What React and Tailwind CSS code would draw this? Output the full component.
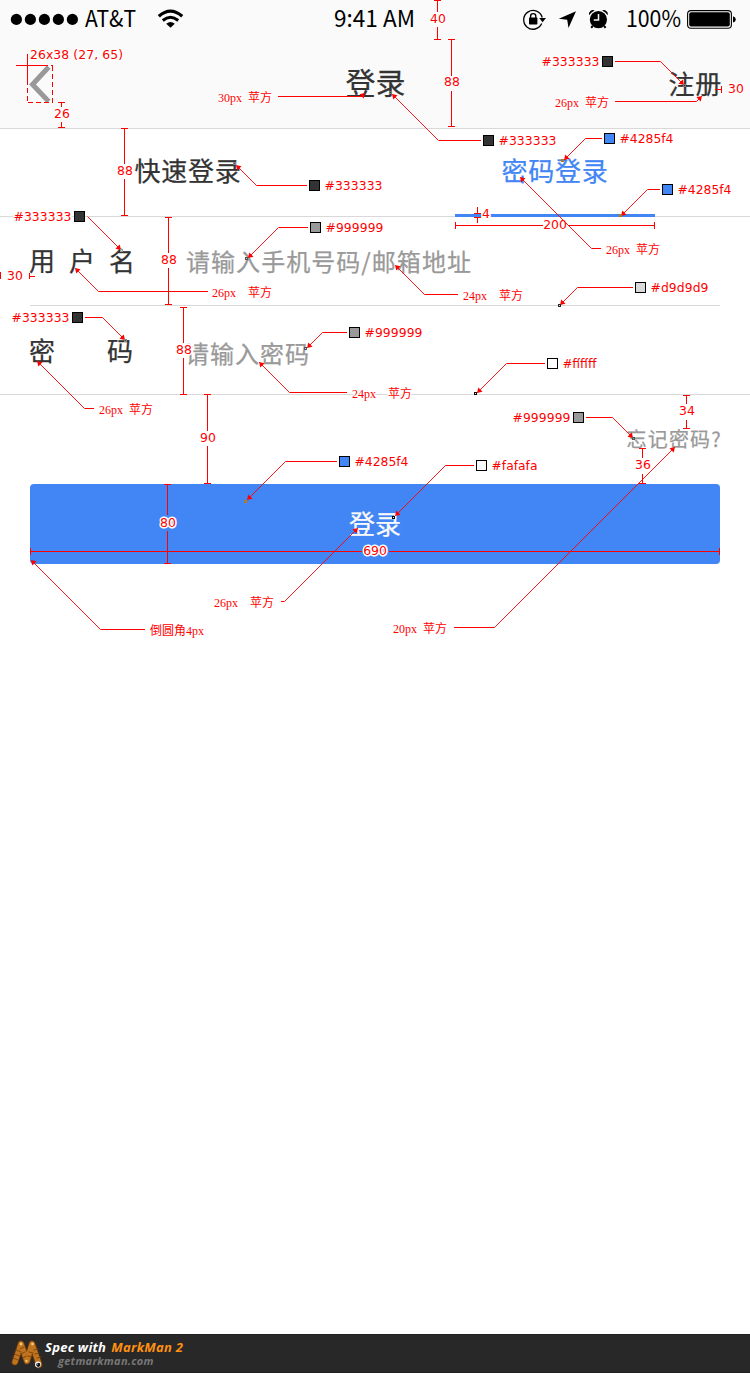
import React from "react";

const RED = "#ff0000";

/* Vertical dimension marks: x, top, bottom, gap top, gap bottom, label, baseline */
const VERTICAL = [
  [437, 0, 39, 12, 27, "40", 23],
  [451, 39, 126, 76, 91, "88", 86],
  [61, 102, 127, 107, 122, "26", 118],
  [124, 128, 215, 164, 179, "88", 175],
  [168, 217, 304, 253, 268, "88", 264],
  [183, 307, 394, 343, 358, "88", 354],
  [207, 394, 483, 431, 446, "90", 442],
  [686, 395, 428, 404, 420, "34", 415],
  [642, 448, 483, 458, 474, "36", 469],
  [167, 484, 563, 515, 531, "80", 527],
];

/* Horizontal dimension marks: y, left, right, gap left, gap right, label, baseline */
const HORIZONTAL = [
  [551, 30, 719, 362, 389, "690", 555],
  [225, 455, 654, 543, 568, "200", 229],
];

/* Colour call-outs: text x, text width, baseline, swatch x/y, fill, leader points, sample point and its colour */
const COLORS = [
  ["#333333", 541.5, 58, 66, 602, 56, [[615, 61], [660, 61], [683, 84]], [684, 85, "#777"]],
  ["#333333", 498.5, 58, 145, 483, 135, [[481, 140], [438, 140], [392, 94]], [390, 92, "#777"]],
  ["#4285f4", 619.5, 54, 143, 604, 133, [[602, 138], [585, 138], [564, 159]], [562, 160, "#bd7a0b"]],
  ["#4285f4", 677.5, 54, 194, 662, 184, [[660, 189], [647, 189], [621, 215]], [620, 215, "#bd7a0b"]],
  ["#333333", 324.5, 58, 190, 309, 180, [[307, 185], [256, 185], [236, 165]], [234, 163, "#888"]],
  ["#999999", 325.5, 58, 232, 310, 222, [[308, 227], [278, 227], [248, 257]], [246, 258, "#555"]],
  ["#333333", 13.5, 58, 221, 74, 211, [[87, 216], [120, 249]], [121, 250, "#999"]],
  ["#d9d9d9", 650.5, 58, 292, 635, 282, [[633, 287], [577, 287], [560, 304]], [559, 305, "#262626"]],
  ["#333333", 11.5, 58, 322, 72, 312, [[85, 317], [102, 317], [124, 339]], [125, 340, "#888"]],
  ["#999999", 364.5, 58, 337, 349, 327, [[347, 332], [322, 332], [307, 347]], [305, 348, "#555"]],
  ["#ffffff", 562.5, 34, 368, 547, 358, [[545, 363], [506, 363], [477, 392]], [475, 393, "#000"]],
  ["#999999", 512.5, 58, 422, 573, 412, [[586, 417], [612, 417], [632, 437]], [633, 438, "#555"]],
  ["#4285f4", 354.5, 54, 466, 339, 456, [[337, 461], [285, 461], [247, 499]], [245, 501, "#bd7a0b"]],
  ["#fafafa", 491.5, 46, 470, 476, 460, [[474, 465], [445, 465], [395, 515]], [393, 517, "#000"]],
];

/* Type notes: text, x, baseline, number of spaces, leader points */
const NOTES = [
  ["30px", 218, 102, 1, [[278, 96], [361, 96], [364, 93]]],
  ["26px", 555, 107, 1, [[615, 101], [696, 101], [701, 96]]],
  ["26px", 606, 254, 1, [[601, 248], [591, 248], [520, 177]]],
  ["26px", 212, 297, 2, [[208, 291], [98, 291], [75, 268]]],
  ["24px", 463, 300, 2, [[458, 294], [424, 294], [395, 265]]],
  ["24px", 352, 398, 2, [[347, 392], [289, 392], [259, 362]]],
  ["26px", 99, 414, 1, [[94, 408], [84, 408], [37, 361]]],
  ["26px", 214, 607, 2, [[281, 601], [284, 601], [357, 528]]],
  ["20px", 393, 633, 1, [[454, 627], [494, 627], [674, 447]]],
];

function Leader({ points }) {
  const n = points.length;
  const [tx, ty] = points[n - 1];
  const [px, py] = points[n - 2];
  const sx = px < tx ? -1 : 1;
  const sy = py < ty ? -1 : 1;
  const x = tx + 0.5;
  const y = ty + 0.5;
  return (
    <g>
      {n === 3 && (
        <path d={`M${points[0][0]} ${points[0][1] + 0.5}H${px + 0.5}`} stroke={RED} strokeWidth="1" />
      )}
      <path d={`M${px + 0.5} ${py + 0.5}L${x} ${y}`} stroke={RED} strokeWidth="0.9" />
      <path
        d={`M${x - sx * 0.5} ${y - sy * 0.5}L${x + sx * 5} ${y + sy * 0.8}L${x + sx * 0.8} ${y + sy * 5}Z`}
        fill={RED}
      />
    </g>
  );
}

function Label({ x, y, children, width, anchor = "start" }) {
  return (
    <text
      x={x}
      y={y}
      textAnchor={anchor}
      textLength={width}
      fill={RED}
      stroke="#ffffff"
      strokeWidth="3"
      strokeLinejoin="round"
      className="font-['DejaVu_Sans',sans-serif] text-[12.4px] [paint-order:stroke]"
    >
      {children}
    </text>
  );
}

function Note({ x, y, latin, cjk, spaces = 0, cjkFirst }) {
  const cls = "font-['Liberation_Serif','Noto_Sans_CJK_SC',serif] text-[12px] [paint-order:stroke]";
  return (
    <g fill={RED} stroke="#ffffff" strokeWidth="2.5" strokeLinejoin="round">
      <text x={cjkFirst ? x + cjk.length * 12 : x} y={y} className={cls}>
        {latin}
      </text>
      <text x={cjkFirst ? x : x + (latin.length + spaces) * 6} y={y} className={cls}>
        {cjk}
      </text>
    </g>
  );
}

function Annotations() {
  return (
    <svg
      width="750"
      height="1373"
      viewBox="0 0 750 1373"
      fill="none"
      className="pointer-events-none absolute top-0 left-0"
    >
      <g stroke={RED} strokeWidth="1">
        <path d="M16 65.5H43M27.5 54V80" />
        <path d="M43 65.5H53M52.5 66V102M27.5 80V102M28 102.5H53" strokeDasharray="5 3" />
        <path d="M474 213.5H481M474 217.5H481M477.5 207V213M477.5 217V223" />
        <path d="M715 89.5H721M721.5 86V93" />
        <path d="M0.5 272V279M29.5 273V279M30 276.5H35" />
      </g>
      {VERTICAL.map(([x, a, b, ga, gb, t, base]) => (
        <g key={x}>
          <path
            d={`M${x - 3} ${a + 0.5}h7M${x - 3} ${b + 0.5}h7M${x + 0.5} ${a}V${ga}M${x + 0.5} ${gb}V${b}`}
            stroke={RED}
          />
          <Label x={x + 1} y={base} anchor="middle">{t}</Label>
        </g>
      ))}
      {HORIZONTAL.map(([y, a, b, ga, gb, t, base]) => (
        <g key={y}>
          <path
            d={`M${a + 0.5} ${y - 3}v7M${b + 0.5} ${y - 3}v7M${a} ${y + 0.5}H${ga}M${gb} ${y + 0.5}H${b}`}
            stroke={RED}
          />
          <Label x={(a + b + 1) / 2} y={base} anchor="middle">{t}</Label>
        </g>
      ))}
      <Label x={30} y={59} width={93}>26x38 (27, 65)</Label>
      <Label x={482} y={218}>4</Label>
      <Label x={728} y={93}>30</Label>
      <Label x={7} y={280}>30</Label>
      {COLORS.map(([t, x, w, y, sx, sy, pts, [cx, cy, cc]]) => (
        <g key={`${sx}-${sy}`}>
          <Leader points={pts} />
          <rect x={cx - 0.5} y={cy - 0.5} width="2" height="2" stroke={cc} />
          <rect x={sx + 0.5} y={sy + 0.5} width="10" height="10" fill={t} stroke="#000000" />
          <Label x={x} y={y} width={w}>{t}</Label>
        </g>
      ))}
      {NOTES.map(([t, x, y, spaces, pts]) => (
        <g key={`${x}-${y}`}>
          <Leader points={pts} />
          <Note x={x} y={y} latin={t} cjk="苹方" spaces={spaces} />
        </g>
      ))}
      <Leader points={[[145, 629], [100, 629], [31, 560]]} />
      <Note x={150} y={635} latin="4px" cjk="倒圆角" cjkFirst />
    </svg>
  );
}

function StatusText({ width, children }) {
  return (
    <svg width={width} height="40" className="shrink-0 overflow-visible">
      <text
        x="0"
        y="27"
        textLength={width}
        lengthAdjust="spacingAndGlyphs"
        className="fill-black font-['Noto_Sans_CJK_SC',sans-serif] text-[23.3px]"
      >
        {children}
      </text>
    </svg>
  );
}

function StatusBar() {
  return (
    <div className="flex h-10 items-start text-black">
      <svg width="85" height="40" className="shrink-0">
        {[16.4, 30.4, 44.4, 58.4, 72.4].map((x) => (
          <circle key={x} cx={x} cy="19.4" r="5.6" />
        ))}
      </svg>
      <StatusText width={51}>AT&amp;T</StatusText>
      <svg width="28" height="40" className="ml-[21px] shrink-0" fill="none" stroke="currentColor">
        <path d="M1.8 16.2Q13.5 6 25.2 16.2" strokeWidth="3.3" />
        <path d="M5.8 20.5Q13.5 14 21.2 20.5" strokeWidth="3" />
        <path d="M9.2 23.8Q13.5 20 17.8 23.8L13.5 27.8Z" fill="currentColor" stroke="none" />
      </svg>
      <span className="ml-[149px] flex">
        <StatusText width={81}>9:41 AM</StatusText>
      </span>
      <svg width="87" height="40" viewBox="522 0 87 40" className="ml-[107px] shrink-0" fill="none">
        <path d="M541.7 23.6A9.4 9.4 0 1 1 542.2 17.5" stroke="#000" strokeWidth="1.3" />
        <path d="M539.2 18H546L542.6 22.3Z" fill="#000" />
        <rect x="529" y="17.6" width="8.4" height="6.8" rx="0.7" fill="#000" />
        <path d="M530.6 18V16.2a2.6 2.6 0 0 1 5.2 0V18" stroke="#000" strokeWidth="1.4" />
        <path d="M576 11.2L558.8 18.8L567.2 19.8L568.5 28Z" fill="#000" />
        <circle cx="598.4" cy="19.6" r="8.6" fill="#000" />
        <path d="M592.7 26L591.2 27.8M604.1 26L605.6 27.8" stroke="#000" strokeWidth="2" />
        <path d="M589 15.2A4.2 4.2 0 0 1 594.7 10.4Q591.2 11.8 589 15.2ZM607.8 15.2A4.2 4.2 0 0 0 602.1 10.4Q605.6 11.8 607.8 15.2Z" fill="#000" />
        <path d="M598.5 14V20H593.8" stroke="#fafafa" strokeWidth="1.5" />
      </svg>
      <span className="ml-[17px] flex">
        <StatusText width={55}>100%</StatusText>
      </span>
      <svg width="50" height="40" viewBox="687 0 50 40" className="ml-[6px] shrink-0">
        <rect x="687.6" y="10.6" width="43.8" height="17.6" rx="3.4" fill="none" stroke="#000" strokeWidth="1.1" />
        <rect x="689.2" y="12.2" width="40.6" height="14.4" rx="2" />
        <path d="M733 16.3Q735.8 17.2 735.8 19.4T733 22.5Z" />
      </svg>
    </div>
  );
}

function MarkManLogo() {
  return (
    <svg width="35" height="32" viewBox="0 0 35 32" fill="none" strokeLinecap="round" strokeLinejoin="round">
      <path d="M5 24L11 6L17 23L22 6L29 27" stroke="#6b3708" strokeWidth="7" />
      <path d="M5 24L11 6L17 23L22 6L29 26" stroke="#bf7420" strokeWidth="5.4" />
      <path
        d="M3 20l5 2M4.500 16l5 2M6 12l5 2M11 16l4-2M12.500 20l4-2M10 11l4-2M18 18l4 1M19 14l4 1M24 12l4-1M25 16l4-1M27 20l4-1"
        stroke="#7a420d"
        strokeWidth="0.9"
      />
      <circle cx="11" cy="6" r="1.4" fill="#f4c875" />
      <circle cx="22.500" cy="6" r="1.4" fill="#f4c875" />
      <circle cx="16.500" cy="23" r="1.2" fill="#f4c875" />
      <circle cx="28" cy="26.500" r="3" fill="#ffffff" />
      <circle cx="28.300" cy="26.800" r="2.1" fill="#111111" />
      <circle cx="27.600" cy="26" r="0.6" fill="#ffffff" />
    </svg>
  );
}

export default function App() {
  return (
    <div className="relative flex h-[1373px] w-[750px] flex-col overflow-hidden bg-white font-['Noto_Sans_CJK_SC',sans-serif] text-[#333333]">
      <header className="h-[129px] border-b border-[#d9d9d9] bg-[#fafafa]">
        <StatusBar />
        <div className="grid h-[88px] grid-cols-3 items-center pr-[28px] pl-[29px] [-webkit-text-stroke:0.25px]">
          <svg width="24" height="38" viewBox="29 65 24 38" fill="none" className="block">
            <path d="M48.700 67L32.500 84.500L48.700 101.500" stroke="#999999" strokeWidth="5" />
          </svg>
          <h1 className="pb-[6px] text-center text-[30px] leading-[44px]">登录</h1>
          <a className="pb-[3px] text-right text-[26px] leading-[44px] tracking-[0.8px]">注册</a>
        </div>
      </header>

      <nav className="flex h-[88px] gap-[167px] border-b border-[#d9d9d9] pl-[88px] text-[26px] tracking-[0.8px] [-webkit-text-stroke:0.25px]">
        <div className="h-[88px] w-[200px] pt-[19px] text-center leading-[44px]">快速登录</div>
        <div className="h-[88px] w-[200px] border-b-[3px] border-[#4285f4] pt-[19px] text-center leading-[44px] text-[#4285f4]">
          密码登录
        </div>
      </nav>

      <section className="border-b border-[#d9d9d9] pl-[29px] [-webkit-text-stroke:0.25px]">
        <div className="mr-[30px] ml-px flex h-[89px] items-center border-b border-[#d9d9d9]">
          <div className="-ml-px flex w-[106px] justify-between pb-[3px] text-[26px]">
            <span>用</span>
            <span>户</span>
            <span>名</span>
          </div>
          <div className="ml-[51px] text-[24px] tracking-[1.05px] text-[#999999]">请输入手机号码/邮箱地址</div>
        </div>
        <div className="flex h-[88px] items-center">
          <div className="flex w-[104px] justify-between pb-[1px] text-[26px]">
            <span>密</span>
            <span>码</span>
          </div>
          <div className="ml-[52px] pt-[5px] text-[24px] tracking-[1px] text-[#999999]">请输入密码</div>
        </div>
      </section>

      <main className="flex flex-1 flex-col px-[30px] [-webkit-text-stroke:0.25px]">
        <div className="-mr-[2px] flex h-[89px] items-center justify-end pb-[2px] text-[20px] tracking-[1.2px] text-[#999999]">
          忘记密码?
        </div>
        <button className="h-[80px] w-[690px] rounded-[4px] bg-[#4285f4] pb-[4px] text-[26px] text-[#fafafa]">登录</button>
      </main>

      <footer className="flex h-[39px] items-center border-y border-[#202020] bg-[#282828] pl-[10px] font-['Open_Sans',sans-serif] font-bold italic">
        <MarkManLogo />
        <div className="flex flex-col">
          <div className="flex h-[14px] gap-[5px] text-[13px] leading-[13px] tracking-[0.27px]">
            <span className="text-white">Spec with</span>
            <span className="text-[#ff9010]">MarkMan 2</span>
          </div>
          <div className="h-[12px] pl-[13px] text-[11px] leading-[12px] tracking-[0.27px] text-[#777777]">getmarkman.com</div>
        </div>
      </footer>

      <Annotations />
    </div>
  );
}
